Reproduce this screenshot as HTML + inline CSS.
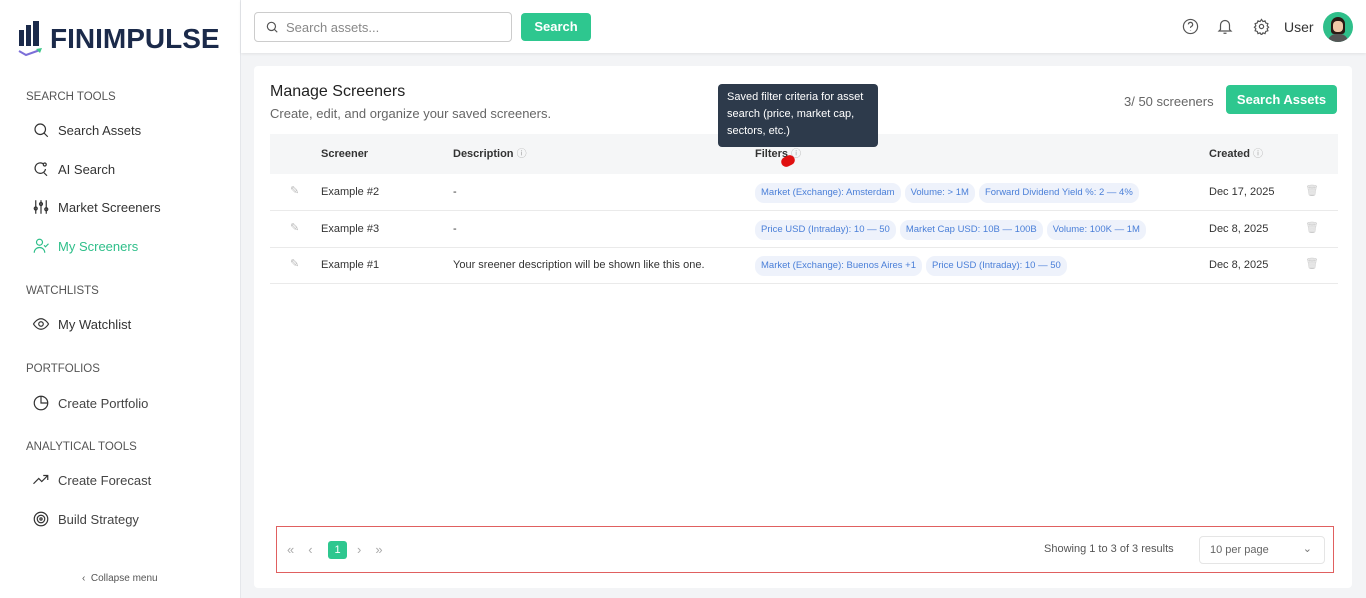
<!DOCTYPE html>
<html><head><meta charset="utf-8"><style>
*{box-sizing:border-box;margin:0;padding:0}
body{width:1366px;height:598px;overflow:hidden;font-family:"Liberation Sans",sans-serif;background:#f3f4f6;color:#333;position:relative}
.sb{position:absolute;left:0;top:0;width:241px;height:598px;background:#fff;border-right:1px solid #e5e7eb}
.logo{position:absolute;left:18px;top:20px;display:flex;align-items:center}
.logo span{font-size:28px;font-weight:bold;color:#1b2a4a;letter-spacing:0;margin-left:6px}
.sec{position:absolute;left:26px;font-size:11.5px;color:#555;letter-spacing:0}
.it{position:absolute;left:32px;font-size:13px;color:#333;display:flex;align-items:center}
.it svg{width:18px;height:18px;margin-right:8px;fill:none;stroke:#333;stroke-width:1.6}
.it.act{color:#2fbf8a}.it.act svg{stroke:#2fbf8a}
.it.dim{color:#444}
.hd{position:absolute;left:241px;top:0;right:0;height:53px;background:#fff;box-shadow:0 1px 3px rgba(0,0,0,.08)}
.srch{position:absolute;left:13px;top:12px;width:258px;height:30px;border:1px solid #ccc;border-radius:4px;font-size:13px;color:#888;padding:7px 0 0 31px}
.btn{position:absolute;background:#2ec78f;color:#fff;font-weight:bold;font-size:13px;border-radius:4px;text-align:center}
.card{position:absolute;left:254px;top:66px;width:1098px;height:522px;background:#fff;border-radius:4px}
.th{position:absolute;left:16px;top:68px;width:1068px;height:40px;background:#f5f6f7;font-size:11px;font-weight:bold;color:#333}
.th div,.row div{position:absolute;line-height:14px}
.th i{font-style:normal;color:#aaa;font-weight:normal;font-size:10px}
.row{position:absolute;left:16px;width:1068px;height:37px;border-bottom:1px solid #eaeaea;font-size:11px;color:#333}
.tag{display:inline-block;background:#eef2fb;color:#4a7fd8;font-size:9.5px;border-radius:9px;padding:3px 6px;margin-right:4px}
.tip{position:absolute;left:718px;top:84px;width:160px;height:63px;background:#2d3a4b;color:#fff;font-size:11px;line-height:17px;padding:5px 9px;border-radius:4px}
</style></head><body>
<div class="sb">
 <div class="logo"><svg width="26" height="38" viewBox="0 0 26 38"><rect x="1" y="10" width="5" height="16" fill="#1b2a4a"/><rect x="8" y="5" width="5" height="21" fill="#1b2a4a"/><rect x="15" y="1" width="6" height="25" fill="#1b2a4a"/><path d="M1 31 L8 35 L22 30" stroke="#7c6fd8" stroke-width="2" fill="none"/><path d="M18 29 L24 28 L22 33" fill="#3ec78a"/></svg><span>FINIMPULSE</span></div>
 <div class="sec" style="top:91px">SEARCH TOOLS</div>
 <div class="it" style="top:121px"><svg viewBox="0 0 24 24"><circle cx="11" cy="11" r="7"/><path d="M16 16l5 5"/></svg>Search Assets</div>
 <div class="it" style="top:160px"><svg viewBox="0 0 24 24"><path d="M15 5a7 7 0 1 0 3 7"/><path d="M16 17l4 4"/><circle cx="17" cy="6" r="2"/></svg>AI Search</div>
 <div class="it" style="top:198px"><svg viewBox="0 0 24 24"><path d="M5 3v18M12 3v18M19 3v18"/><circle cx="5" cy="14" r="2"/><circle cx="12" cy="8" r="2"/><circle cx="19" cy="15" r="2"/></svg>Market Screeners</div>
 <div class="it act" style="top:237px"><svg viewBox="0 0 24 24"><circle cx="10" cy="7" r="4"/><path d="M3 21c0-4 3-7 7-7s7 3 7 7M16 11l2 2 4-4"/></svg>My Screeners</div>
 <div class="sec" style="top:285px">WATCHLISTS</div>
 <div class="it" style="top:315px"><svg viewBox="0 0 24 24"><path d="M2 12s4-7 10-7 10 7 10 7-4 7-10 7S2 12 2 12z"/><circle cx="12" cy="12" r="3"/></svg>My Watchlist</div>
 <div class="sec" style="top:363px">PORTFOLIOS</div>
 <div class="it dim" style="top:394px"><svg viewBox="0 0 24 24"><circle cx="12" cy="12" r="9"/><path d="M12 3v9h9"/></svg>Create Portfolio</div>
 <div class="sec" style="top:441px">ANALYTICAL TOOLS</div>
 <div class="it dim" style="top:471px"><svg viewBox="0 0 24 24"><path d="M2 17l7-7 4 4 8-8M15 6h6v6"/></svg>Create Forecast</div>
 <div class="it dim" style="top:510px"><svg viewBox="0 0 24 24"><circle cx="12" cy="12" r="9"/><circle cx="12" cy="12" r="5"/><circle cx="12" cy="12" r="1.5"/></svg>Build Strategy</div>
 <div style="position:absolute;top:573px;left:82px;font-size:10px;color:#555">‹&nbsp; Collapse menu</div>
</div>
<div class="hd">
 <div class="srch"><svg style="position:absolute;left:10px;top:7px" width="14" height="14" viewBox="0 0 24 24" fill="none" stroke="#555" stroke-width="2"><circle cx="11" cy="11" r="7"/><path d="M16 16l5 5"/></svg>Search assets...</div>
 <div class="btn" style="left:280px;top:13px;width:70px;height:28px;line-height:28px">Search</div>
 <svg style="position:absolute;left:941px;top:18px" width="17" height="17" viewBox="0 0 24 24" fill="none" stroke="#555" stroke-width="1.7"><circle cx="12" cy="12" r="10"/><path d="M9 9a3 3 0 1 1 4 3c-1 .5-1 1-1 2M12 17v.5"/></svg>
 <svg style="position:absolute;left:975px;top:17px" width="18" height="19" viewBox="0 0 24 24" fill="none" stroke="#555" stroke-width="1.6"><path d="M6 16V10a6 6 0 0 1 12 0v6l2 2H4zM10 21h4"/></svg>
 <svg style="position:absolute;left:1012px;top:18px" width="17" height="17" viewBox="0 0 24 24" fill="none" stroke="#555" stroke-width="1.7"><circle cx="12" cy="12" r="3"/><path d="M12 2l2 3 3-1 1 3 3 1-1 3 2 2-2 2 1 3-3 1-1 3-3-1-2 3-2-3-3 1-1-3-3-1 1-3-2-2 2-2-1-3 3-1 1-3 3 1z"/></svg>
 <div style="position:absolute;left:1043px;top:19px;font-size:14px;color:#333">User</div>
 <div style="position:absolute;left:1082px;top:12px;width:30px;height:30px;border-radius:50%;background:#2fbf8a;overflow:hidden"><div style="position:absolute;left:8px;top:5px;width:14px;height:17px;background:#2a1a14;border-radius:7px 7px 3px 3px"></div><div style="position:absolute;left:10px;top:9px;width:10px;height:11px;background:#f1c9a8;border-radius:4px"></div><div style="position:absolute;left:5px;top:22px;width:20px;height:10px;background:#555;border-radius:8px 8px 0 0"></div></div>
</div>
<div class="card">
 <div style="position:absolute;left:16px;top:17px;font-size:16px;color:#222">Manage Screeners</div>
 <div style="position:absolute;left:16px;top:40px;font-size:13px;color:#666">Create, edit, and organize your saved screeners.</div>
 <div style="position:absolute;left:870px;top:28px;font-size:13px;color:#666">3/ 50 screeners</div>
 <div class="btn" style="left:972px;top:19px;width:111px;height:29px;line-height:29px">Search Assets</div>
 <div class="th">
  <div style="left:51px;top:13px">Screener</div>
  <div style="left:183px;top:13px">Description <i>ⓘ</i></div>
  <div style="left:485px;top:13px">Filters <i>ⓘ</i></div>
  <div style="left:939px;top:13px">Created <i>ⓘ</i></div>
 </div>
 <div class="row" style="top:108px"><div style="left:20px;top:10px;color:#bbb">✎</div><div style="left:51px;top:11px">Example #2</div><div style="left:183px;top:11px">-</div><div style="left:485px;top:9px;white-space:nowrap"><span class="tag">Market (Exchange): Amsterdam</span><span class="tag">Volume: &gt; 1M</span><span class="tag">Forward Dividend Yield %: 2 — 4%</span></div><div style="left:939px;top:11px">Dec 17, 2025</div><div style="left:1035px;top:10px;color:#ccc">🗑</div></div>
 <div class="row" style="top:145px"><div style="left:20px;top:10px;color:#bbb">✎</div><div style="left:51px;top:11px">Example #3</div><div style="left:183px;top:11px">-</div><div style="left:485px;top:9px;white-space:nowrap"><span class="tag">Price USD (Intraday): 10 — 50</span><span class="tag">Market Cap USD: 10B — 100B</span><span class="tag">Volume: 100K — 1M</span></div><div style="left:939px;top:11px">Dec 8, 2025</div><div style="left:1035px;top:10px;color:#ccc">🗑</div></div>
 <div class="row" style="top:181px"><div style="left:20px;top:10px;color:#bbb">✎</div><div style="left:51px;top:11px">Example #1</div><div style="left:183px;top:11px">Your sreener description will be shown like this one.</div><div style="left:485px;top:9px;white-space:nowrap"><span class="tag">Market (Exchange): Buenos Aires +1</span><span class="tag">Price USD (Intraday): 10 — 50</span></div><div style="left:939px;top:11px">Dec 8, 2025</div><div style="left:1035px;top:10px;color:#ccc">🗑</div></div>
 <div style="position:absolute;left:22px;top:460px;width:1058px;height:47px;border:1px solid #e06060">
  <div style="position:absolute;left:10px;top:15px;font-size:13px;color:#aaa;letter-spacing:14px">«‹</div>
  <div style="position:absolute;left:51px;top:14px;width:19px;height:18px;background:#2ec78f;color:#fff;border-radius:3px;font-size:11px;text-align:center;line-height:18px">1</div>
  <div style="position:absolute;left:80px;top:15px;font-size:13px;color:#aaa;letter-spacing:14px">›»</div>
  <div style="position:absolute;left:767px;top:16px;font-size:11px;color:#555">Showing 1 to 3 of 3 results</div>
  <div style="position:absolute;left:922px;top:9px;width:126px;height:28px;border:1px solid #e5e5e5;border-radius:4px;font-size:11px;color:#666;padding:7px 10px">10 per page<span style="position:absolute;right:12px;top:5px;color:#777">⌄</span></div>
 </div>
</div>
<div class="tip">Saved filter criteria for asset search (price, market cap, sectors, etc.)</div>
<div style="position:absolute;left:781px;top:156px;width:14px;height:10px;background:#e01010;border-radius:6px;transform:rotate(-25deg)"></div>
</body></html>
